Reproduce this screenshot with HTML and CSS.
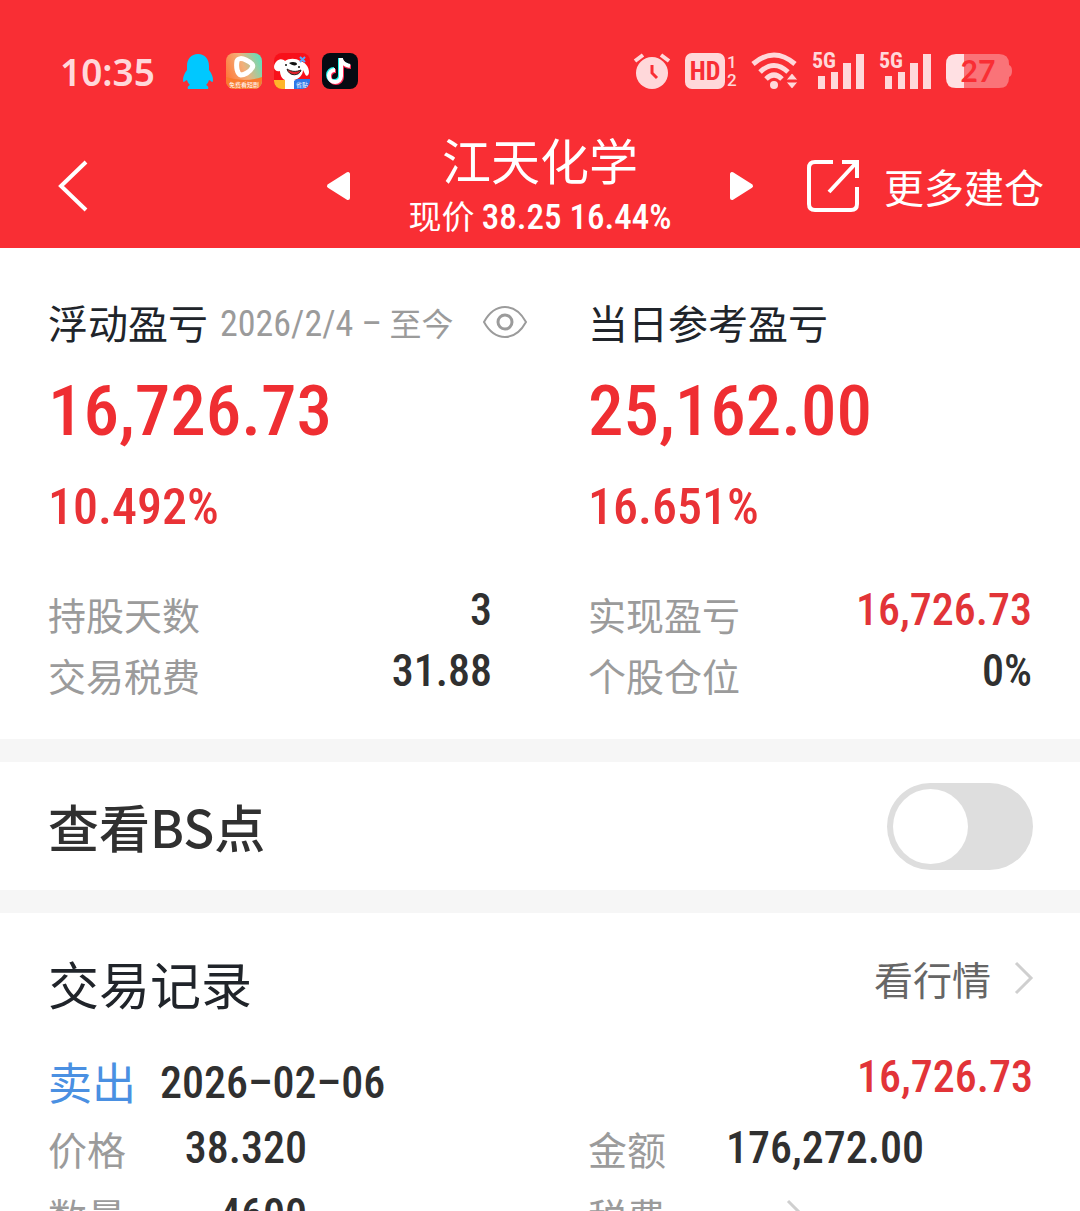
FILE: index.html
```html
<!DOCTYPE html>
<html lang="zh-CN">
<head>
    <meta charset="UTF-8" />
    <meta name="viewport" content="width=device-width, initial-scale=1" />
    <title>江天化学</title>
    <link rel="stylesheet" href="styles.css">
</head>
<body>
<div class="page">

    <header class="header">
        <div class="status">
            <div class="status-left">
                <span class="clock">10:35</span>
                <!-- QQ -->
                <svg width="32" height="36" viewBox="0 0 32 36">
                    <path fill="#00c8ff" d="M16 1C9 1 5 6 5 13v4c-3 4-4 7-4 10 0 2 1 3 2 1l2-1c1 3 2 4 3 5-2 1-3 2-2 4h20c1-2 0-3-2-4 1-1 2-2 3-5l2 1c1 2 2 1 2-1 0-3-1-6-4-10v-4C27 6 23 1 16 1z"/>
                </svg>
                <!-- video -->
                <svg width="36" height="36" viewBox="0 0 36 36">
                    <defs>
                        <linearGradient id="video" x1="0" y1="0.6" x2="1" y2="0.2">
                            <stop offset="0" stop-color="#ff7a3c"/>
                            <stop offset="0.5" stop-color="#f2b07a"/>
                            <stop offset="1" stop-color="#5fe0bd"/>
                        </linearGradient>
                        <clipPath id="round"><rect width="36" height="36" rx="8"/></clipPath>
                    </defs>
                    <g clip-path="url(#round)">
                        <rect width="36" height="36" fill="url(#video)"/>
                        <path fill="#f97b2e" d="M0 24q18 6 36 0v12H0z"/>
                        <path fill="none" stroke="#fff" stroke-width="5" stroke-linejoin="round" d="M11 8c1-3 5-3 9-1 6 3 8 5 6 8-2 4-8 7-11 7-4-1-5-8-4-14z"/>
                        <text class="tiny" x="18" y="34" text-anchor="middle">免费看短剧</text>
                    </g>
                </svg>
                <!-- JD dog -->
                <svg width="36" height="36" viewBox="0 0 36 36">
                    <g clip-path="url(#round)">
                        <rect width="36" height="36" fill="#f8101a"/>
                        <path fill="#fff" d="M2 9c3-4 7-3 9-1 4-3 11-3 15 0 5 1 9 6 9 11 0 4-3 5-4 2l-2-4c0 5-4 9-9 10h6v9H11v-9C8 26 6 22 6 18c-3 1-6-1-6-4 0-2 1-4 2-5z"/>
                        <path fill="#111" d="M15 10c3-2 8-1 8 1s-5 2-8-1z"/>
                        <circle cx="12" cy="12" r="1" fill="#111"/>
                        <circle cx="25" cy="14" r="1" fill="#111"/>
                        <path fill="#e1222c" stroke="#222" d="M13 16c5 3 9 3 14 1-1 6-12 7-14-1z"/>
                        <path stroke="#58a7ff" stroke-width="2" d="M26 4l5 5m0-5l-5 5"/>
                        <path fill="#ffb52a" d="M0 27h11v9H0z"/>
                        <path fill="#2d78e8" d="M20 28l3-2h13v10H20z"/>
                        <text class="tiny" x="28" y="34" text-anchor="middle">省贴</text>
                    </g>
                </svg>
                <!-- Douyin -->
                <svg width="36" height="36" viewBox="0 0 36 36">
                    <rect width="36" height="36" rx="8" fill="#060a12"/>
                    <g fill="none" stroke-width="4">
                        <path stroke="#25f4ee" d="M18 5v17a6 6 0 1 1-6-6M18 6c1 4 4 6 8 6"/>
                        <path stroke="#fe2c55" d="M20 7v17a6 6 0 1 1-6-6M20 8c1 4 4 6 9 6"/>
                        <path stroke="#fff" d="M19 5v18a6 6 0 1 1-6-6M19 6c1 4 4 6 9 7"/>
                    </g>
                </svg>
            </div>
            <div class="status-right">
                <svg width="36" height="36" viewBox="0 0 36 36">
                    <circle cx="18" cy="20" r="16" fill="#ffd8da"/>
                    <path fill="none" stroke="#ffd8da" stroke-width="4" d="M1 8l8-6M35 8l-8-6"/>
                    <path fill="none" stroke="#f92e34" stroke-width="3" d="M18 12v8l5 5"/>
                </svg>
                <svg width="52" height="36" viewBox="0 0 52 36">
                    <rect width="40" height="36" rx="7" fill="#ffd8da"/>
                    <text class="hd-text" x="20" y="27" text-anchor="middle">HD</text>
                    <text class="sim" x="42" y="15">1</text>
                    <text class="sim" x="42" y="33">2</text>
                </svg>
                <svg width="45" height="36" viewBox="0 0 45 36">
                    <g fill="none" stroke="#ffd8da" stroke-width="5">
                        <path d="M1 11Q22-7 43 11"/>
                        <path d="M8 19Q22 6 36 19"/>
                        <path d="M14 26q8-8 16 0"/>
                    </g>
                    <circle cx="22" cy="32" r="4" fill="#ffd8da"/>
                    <path fill="#ffd8da" stroke="#f92e34" d="M34 27l6-7 6 7zM34 29l6 7 6-7z"/>
                </svg>
                <svg width="52" height="38" viewBox="0 0 52 38">
                    <text class="net" x="0" y="16">5G</text>
                    <path fill="#ffd8da" d="M6 24h7v13H6zM19 20h7v17h-7zM31 11h8v26h-8zM44 2h8v35h-8z"/>
                </svg>
                <svg width="52" height="38" viewBox="0 0 52 38">
                    <text class="net" x="0" y="16">5G</text>
                    <path fill="#ffd8da" d="M6 24h7v13H6zM19 20h7v17h-7zM31 11h8v26h-8zM44 2h8v35h-8z"/>
                </svg>
                <svg width="66" height="34" viewBox="0 0 66 34">
                    <path fill="#fa7378" d="M10 0h43q10 0 10 10v1q3 1 3 6t-3 6v1q0 10-10 10H10z"/>
                    <path fill="#ffe0e3" d="M18 0v34h-8Q0 34 0 24V10Q0 0 10 0z"/>
                    <text class="battery" x="32" y="28" text-anchor="middle">27</text>
                </svg>
            </div>
        </div>

        <nav class="nav">
            <button class="back" aria-label="返回">
                <svg width="32" height="52" viewBox="0 0 32 52">
                    <path fill="none" stroke="#fff" stroke-width="4" d="M29 2L4 26l25 24"/>
                </svg>
            </button>
            <div class="stock">
                <button aria-label="上一只">
                    <svg width="24" height="30" viewBox="0 0 24 30">
                        <path fill="#fff" stroke="#fff" stroke-width="4" stroke-linejoin="round" d="M22 3v24L3 15z"/>
                    </svg>
                </button>
                <div class="stock-name">
                    <h1>江天化学</h1>
                    <p>现价 <span class="num">38.25 16.44%</span></p>
                </div>
                <button aria-label="下一只">
                    <svg width="24" height="30" viewBox="0 0 24 30">
                        <path fill="#fff" stroke="#fff" stroke-width="4" stroke-linejoin="round" d="M2 3v24l19-12z"/>
                    </svg>
                </button>
            </div>
            <a class="more" href="#">
                <svg width="54" height="54" viewBox="0 0 54 54">
                    <path fill="none" stroke="#fff" stroke-width="4" d="M27 3H9Q3 3 3 9v36q0 6 6 6h36q6 0 6-6V28M36 3h15v16M50 4L23 33"/>
                </svg>
                更多建仓
            </a>
        </nav>
    </header>

    <section class="summary">
        <div class="col">
            <h2>浮动盈亏
                <small><span class="num">2026/2/4 –</span> 至今</small>
                <button class="eye" aria-label="隐藏金额">
                    <svg width="44" height="32" viewBox="0 0 44 32">
                        <g fill="none" stroke="#9b9b9b" stroke-width="2">
                            <path d="M1 16C12-4 32-4 43 16 32 36 12 36 1 16z"/>
                            <circle cx="22" cy="16" r="7" stroke-width="3"/>
                        </g>
                    </svg>
                </button>
            </h2>
            <p class="amount num">16,726.73</p>
            <p class="percent num">10.492%</p>
            <dl>
                <dt>持股天数</dt><dd class="num">3</dd>
                <dt>交易税费</dt><dd class="num">31.88</dd>
            </dl>
        </div>
        <div class="col">
            <h2>当日参考盈亏</h2>
            <p class="amount num">25,162.00</p>
            <p class="percent num">16.651%</p>
            <dl>
                <dt>实现盈亏</dt><dd class="num red">16,726.73</dd>
                <dt>个股仓位</dt><dd class="num">0%</dd>
            </dl>
        </div>
    </section>

    <section class="bs">
        <label for="bsSwitch">查看BS点</label>
        <input type="checkbox" id="bsSwitch" class="switch" />
    </section>

    <section class="records">
        <div class="records-head">
            <h2>交易记录</h2>
            <a href="#">看行情
                <svg width="18" height="32" viewBox="0 0 18 32">
                    <path fill="none" stroke="#cfcfcf" stroke-width="3" d="M1 1l15 15L1 31"/>
                </svg>
            </a>
        </div>
        <div class="trade">
            <span class="side">卖出</span>
            <span class="date num">2026–02–06</span>
            <span class="profit num">16,726.73</span>
        </div>
        <dl class="detail">
            <dt>价格</dt><dd class="num">38.320</dd>
            <dt>金额</dt><dd class="num">176,272.00</dd>
            <dt>数量</dt><dd class="num">4600</dd>
            <dt>税费</dt>
            <dd class="fee">
                <svg width="18" height="32" viewBox="0 0 18 32">
                    <path fill="none" stroke="#cfcfcf" stroke-width="3" d="M1 1l15 15L1 31"/>
                </svg>
            </dd>
        </dl>
    </section>

</div>
</body>
</html>
```
FILE: styles.css
```css
* {
    box-sizing: border-box;
    margin: 0;
    padding: 0;
}

body {
    font-family: "Noto Sans CJK SC", sans-serif;
    color: #303030;
    background: #f6f6f6;
}

.page {
    height: 100vh;
    overflow: hidden;
}

button {
    border: none;
    background: none;
    cursor: pointer;
}

a {
    text-decoration: none;
    color: inherit;
}

svg {
    display: block;
    flex: none;
    overflow: visible;
}

h1, h2 {
    font-weight: 400;
}

.num {
    font-family: "Roboto Condensed", Roboto, sans-serif;
    font-weight: 500;
}

/* header */
.header {
    height: 248px;
    background: #f92e34;
    color: #fff;
}

.status {
    display: flex;
    justify-content: space-between;
    align-items: center;
    height: 124px;
    padding: 18px 68px 0 60px;
}

.status-left {
    display: flex;
    align-items: center;
    gap: 12px;
}

.clock {
    width: 110px;
    font-family: "Noto Sans", sans-serif;
    font-size: 37px;
    font-weight: 600;
    color: #ffd8da;
}

.status-right {
    display: flex;
    align-items: center;
    gap: 15px;
}

.tiny {
    font-size: 6px;
    fill: #fff;
}

.hd-text {
    font: bold 26px "Roboto Condensed", Roboto, sans-serif;
    fill: #f92e34;
}

.sim {
    font: 500 17px Roboto, sans-serif;
    fill: #ffd8da;
}

.net {
    font: bold 22px "Roboto Condensed", Roboto, sans-serif;
    fill: #ffd8da;
}

.battery {
    font: bold 30px Lato, sans-serif;
    fill: #f92e34;
}

.nav {
    display: grid;
    grid-template-columns: minmax(0, 1fr) 428px minmax(0, 1fr);
    align-items: center;
    height: 124px;
    padding: 0 36px;
}

.back {
    justify-self: start;
    padding-left: 21px;
}

.stock {
    display: flex;
    justify-content: space-between;
    align-items: center;
}

.stock-name {
    text-align: center;
}

.stock-name h1 {
    font-size: 49px;
    line-height: 60px;
}

.stock-name p {
    font-size: 33px;
    line-height: 52px;
}

.stock-name .num {
    font-size: 35px;
}

.more {
    display: flex;
    align-items: center;
    justify-self: end;
    gap: 24px;
    font-size: 40px;
    white-space: nowrap;
}

/* profit summary */
.summary {
    display: grid;
    grid-template-columns: minmax(0, 1fr) minmax(0, 1fr);
    padding: 44px 0 34px;
    background: #fff;
}

.col {
    padding: 0 48px;
}

.col h2 {
    display: flex;
    align-items: center;
    gap: 12px;
    height: 60px;
    font-size: 40px;
    color: #20242a;
    white-space: nowrap;
}

.col small {
    font-size: 32px;
    color: #9b9b9b;
}

.col small .num {
    font-size: 36px;
    font-weight: 400;
}

.eye {
    margin-left: 18px;
}

.amount {
    font-size: 71px;
    line-height: 118px;
    color: #ef2e32;
}

.percent {
    font-size: 50px;
    line-height: 74px;
    color: #e93236;
}

.col dl {
    display: grid;
    grid-template-columns: auto 1fr;
    padding-top: 39px;
}

.col dt {
    font-size: 38px;
    line-height: 61px;
    color: #9b9b9b;
}

.col dd {
    font-size: 44px;
    line-height: 54px;
    text-align: right;
}

.col .red {
    color: #e23438;
}

/* BS switch */
.bs {
    display: flex;
    justify-content: space-between;
    align-items: center;
    height: 128px;
    margin: 23px 0;
    padding: 0 47px 0 48px;
    background: #fff;
    font-size: 51px;
    font-weight: 500;
}

.switch {
    appearance: none;
    width: 146px;
    height: 87px;
    padding: 6px;
    border-radius: 44px;
    background: #dedede;
    cursor: pointer;
}

.switch::before {
    content: "";
    display: block;
    width: 75px;
    height: 75px;
    border-radius: 50%;
    background: #fff;
}

.switch:checked {
    background: #f92e34;
}

.switch:checked::before {
    margin-left: auto;
}

/* trade records */
.records {
    padding: 30px 47px 0 48px;
    background: #fff;
}

.records-head {
    display: flex;
    justify-content: space-between;
}

.records-head h2 {
    font-size: 51px;
    line-height: 80px;
    color: #20242a;
}

.records-head a {
    display: flex;
    align-items: center;
    gap: 24px;
    height: 70px;
    font-size: 39px;
    color: #666;
}

.trade {
    display: flex;
    align-items: flex-start;
    height: 92px;
    padding-top: 24px;
}

.side {
    font-size: 44px;
    line-height: 68px;
    color: #4a90e2;
    margin-right: 24px;
}

.date {
    font-size: 44px;
    line-height: 72px;
}

.profit {
    font-size: 44px;
    line-height: 60px;
    color: #e23438;
    margin-left: auto;
}

.detail {
    display: grid;
    grid-template-columns: 80px 179px 1fr 80px 256px 109px;
    line-height: 67px;
}

.detail dt {
    grid-column: 1;
    font-size: 39px;
    color: #9b9b9b;
}

.detail dd {
    grid-column: 2;
    font-size: 44px;
    text-align: right;
}

.detail dt:nth-of-type(even) {
    grid-column: 4;
}

.detail dd:nth-of-type(even) {
    grid-column: 5;
}

.detail .fee {
    display: flex;
    justify-content: center;
    align-items: center;
}
```
